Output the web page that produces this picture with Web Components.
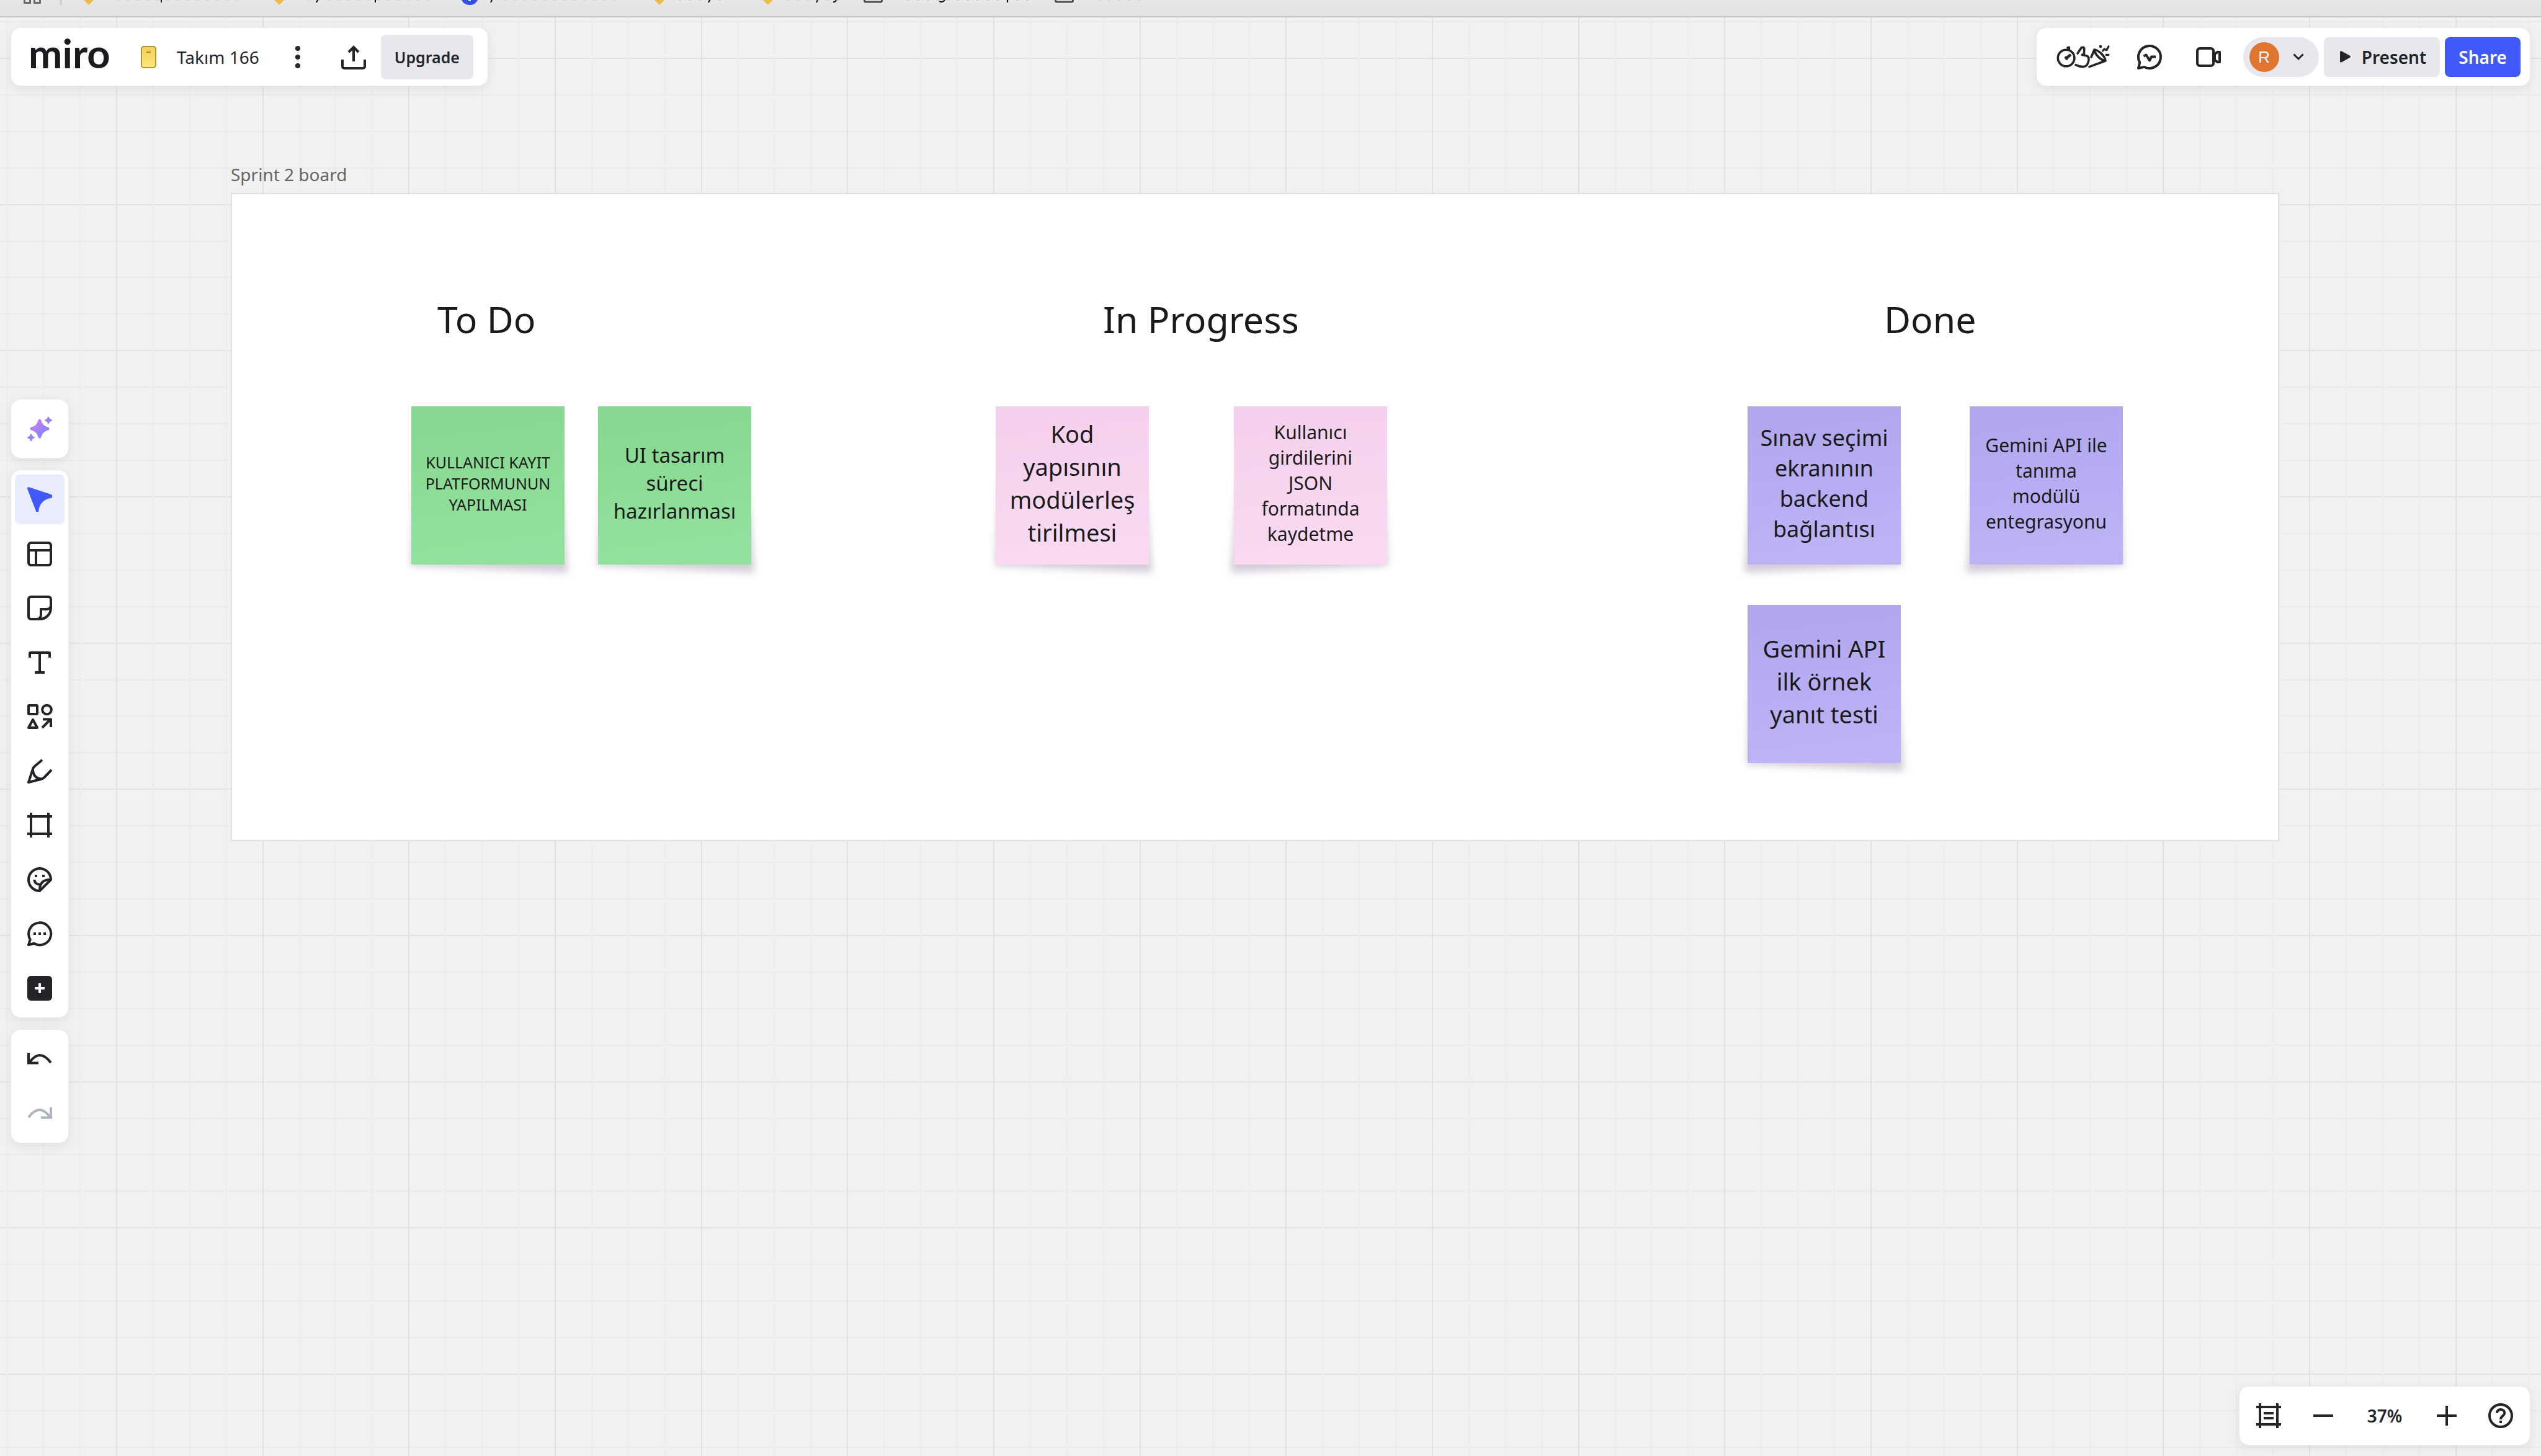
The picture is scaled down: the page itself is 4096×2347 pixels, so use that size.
<!DOCTYPE html>
<html lang="tr">
<head>
<meta charset="utf-8">
<title>Takım 166</title>
<style>
html,body{margin:0;height:100%;overflow:hidden}
body{font-family:"Noto Sans","Open Sans",sans-serif;color:#222428}
</style>
</head>
<body>
<miro-app></miro-app>
<script>
const ICONS = {
  spark: ['<defs><linearGradient id="g" x1="0" y1="0" x2="1" y2="1"><stop offset=".1" stop-color="#cb7df0"/><stop offset=".9" stop-color="#7585ff"/></linearGradient></defs><path fill="url(#g)" d="M17.6 6.5c.7-2.8 4.1-2.8 4.8 0 1.7 6.2 4.7 9.2 11 11.1 2.9.8 2.9 4.1 0 4.8-6.3 1.900-9.3 4.900-11 11.1-.7 2.800-4.1 2.800-4.8 0-1.7-6.2-4.7-9.2-11-11.1-2.9-.7-2.9-4 0-4.8 6.3-1.900 9.3-4.900 11-11.1z"/><g fill="#9f7df0"><path d="M33.3.4h1.4c.6 2.8 2 4.4 5.3 5.3v1.5c-3.3.8-4.7 2.4-5.3 5.2h-1.4c-.6-2.8-2-4.4-5.3-5.2V5.7c3.3-.9 4.7-2.5 5.3-5.3z"/><path d="M5.3 28.3h1.4c.6 2.8 2 4.4 5.3 5.3v1.5c-3.3.8-4.7 2.4-5.3 5.2H5.3c-.6-2.8-2-4.4-5.3-5.2v-1.5c3.3-.9 4.7-2.5 5.3-5.3z"/></g>',40,40],
  cursor: ['<path fill="#4059fa" d="M2.6.3 39 12.2c1.4.5 1.4 5.3 0 5.5C27 19 19 27 18.2 39.5c0 .7-3.7.7-4 0L.3 3.6C-.5 1.5.8-.3 2.6.3z"/>',40,40],
  template: ['<g class="s"><rect x="2" y="2" width="36" height="36" rx="4"/><path d="M2 14h36M14 14v24"/></g>',40,40],
  sticky: ['<g class="s"><path d="M20 38H6a4 4 0 0 1-4-4V6a4 4 0 0 1 4-4h28a4 4 0 0 1 4 4v14c0 10-8 18-18 18z"/><path d="M38 16c0 4-3 6-7 6h-9v9c0 4-3 7-7 7"/></g>',40,40],
  text: ['<g class="s"><path d="M4 12V5a1 1 0 0 1 1-1h30a1 1 0 0 1 1 1v7M20 4v32M12 36h16"/></g>',40,40],
  shapes: ['<g class="s" stroke-linejoin="round"><rect x="2" y="2" width="14" height="14" rx="1"/><circle cx="31.5" cy="9" r="7.3"/><path d="M9 25 2 38h14z"/><path d="M24 38 37 25M25 24.5h13V37"/></g>',40,40],
  pen: ['<g class="s" stroke-linejoin="round"><path d="M24 2 11.5 12.5C10 14 9.2 15.5 8.8 17L2 38l20-5c2-.5 3.5-1.2 5-2.5L39 18"/><path d="M9 17c0 9 5 15.5 14 15.5"/></g>',40,40],
  frame: ['<g class="s"><path d="M0 6h40M0 34h40M6 0v40M34 0v40"/></g>',40,40],
  sticker: ['<g class="s" stroke-linejoin="round"><path d="M20 38A18 18 0 1 1 38 20z"/><path d="M38 20c-12-.5-18.500 5-18 18M11.5 20c0 5 4 8 9 7.5"/></g><path d="M12 12h4v4h-4zM24 12h4v4h-4z"/>',40,40],
  comment: ['<g class="s" stroke-linejoin="round"><path d="M4.7 29.5A18 18 0 1 1 11 35.8L2 38z"/></g><path d="M10 18h4v4h-4zM18 18h4v4h-4zM26 18h4v4h-4z"/>',40,40],
  more: ['<rect width="40" height="40" rx="6"/><path stroke="#fff" stroke-width="4" d="M12 20h16M20 12v16"/>',40,40],
  undo: ['<g class="s"><path d="M2 10v16.5h16M3 26C9 18 14 14 20 14s12 4 18 12"/></g>',40,40],
  redo: ['<g class="s" style="stroke:#afb3c2"><path d="M38 10v16.5H22M37 26C31 18 26 14 20 14S8 18 2 26"/></g>',40,40],
  fit: ['<g class="s"><path d="M0 6h40M0 34h40M6 0v40M34 0v40M12 16h16M12 24h16"/></g>',40,40],
  minus: ['<g class="s"><path d="M4 20h32"/></g>',40,40],
  plus: ['<g class="s"><path d="M4 20h32M20 4v32"/></g>',40,40],
  help: ['<g class="s"><circle cx="20" cy="20" r="18"/><path d="M14 15.8C14 12.3 16.7 10 20 10s6.3 2.3 6.3 5.5c0 4.5-6.3 5-6.3 10.5"/></g><path d="M18 28h4v4h-4z"/>',40,40],
  kebab: ['<circle cx="20" cy="6" r="4"/><circle cx="20" cy="20" r="4"/><circle cx="20" cy="34" r="4"/>',40,40],
  upload: ['<g class="s"><path d="M2 24v11a3 3 0 0 0 3 3h30a3 3 0 0 0 3-3V24M20 27V5M12 12l8-8 8 8"/></g>',40,40],
  chat: ['<g class="s" stroke-linejoin="round"><path d="M4.2 28.7A18 18 0 1 1 11.5 35.9L2 38z"/><path d="m10.5 18.8 4-2.3 5.5 9 3-6h7"/></g>',40,40],
  video: ['<g class="s" stroke-linejoin="round"><rect x="2" y="6" width="26" height="28" rx="4"/><path d="m30 15 4.5-3H38v16h-3.5L30 25z"/></g>',40,40],
  chevron: ['<path d="m1.5 1.5 7.5 7.5 7.5-7.5" fill="none" stroke="#222428" stroke-width="3"/>',18,11],
  play: ['<path d="M0 2C0 .4 1.3-.3 2.7.4L16 7.7c1.3.8 1.3 2.3 0 3L2.7 18.3C1.3 19 0 18.3 0 16.7z"/>',17,19],
  team: ['<defs><linearGradient id="t" x1="0" y1="0" x2="0" y2="1"><stop offset="0" stop-color="#f2d055"/><stop offset="1" stop-color="#fde87c"/></linearGradient></defs><rect x="1" y="1" width="23" height="34" rx="4" fill="url(#t)" stroke="#b3923a" stroke-width="2"/><path d="M9 10h7" stroke="#a98934" stroke-width="2"/>',25,36],
  party: ['<g class="s" style="stroke-width:3.6" stroke-linecap="round" stroke-linejoin="round"><circle cx="15.6" cy="21.5" r="13.3"/><path d="m18 5 2-.8.5 3z"/><path d="m16 21.5 5.5-4.3M15 21l1.5 1.5" style="stroke-width:4.5"/><path d="M34 14 39.5 5.8c1.6-2.3 5-2 5.2 1L44.5 13c0 2.2-1 3.4-3.3 3.4l5.8 1c3.8.8 5.5 3 5 7-.8 6-2.5 11-8.5 11.2-4 .2-7.5-.6-12.5-3"/><path d="M53 35.6 79 26M56 20l5-12M61 8c7 1 17 10 18 18-8-1-17-10-18-18z"/><path d="m74.5 10 2.5-3 3.5 1.800L84 3M80 16.3h4" style="stroke-width:3.2"/></g><circle cx="71" cy="3" r="2.3"/>',86,40]
};
const icon = n => { const [b,w,h]=ICONS[n]; return `<svg class="icon" width="${w}" height="${h}" viewBox="0 0 ${w} ${h}" fill="#222428" aria-hidden="true">${b}</svg>`; };
const ICON_CSS = '.icon{display:block;overflow:visible;flex:none}.s{fill:none;stroke:#222428;stroke-width:4}';
const define = (name, render, after) => customElements.define(name, class extends HTMLElement {
  connectedCallback(){
    if (this.shadowRoot) return;
    this.attachShadow({mode:'open'}).innerHTML = render(this);
    if (after) after(this);
  }
});
const BTN = 'button{all:unset;box-sizing:border-box;display:flex;align-items:center;justify-content:center;cursor:pointer}';

/* icon-only button */
define('icon-button', el => `<style>:host{display:block}${BTN}
button{width:var(--w,80px);height:80px;border-radius:8px}
:host([active]) button{background:#e8ecfc}${ICON_CSS}</style>
<button aria-label="${el.getAttribute('label')}">${icon(el.getAttribute('icon'))}</button>`);

/* button with a caption */
define('text-button', el => `<style>:host{display:block}${BTN}
button{height:64px;padding:0 22px;gap:18px;border-radius:8px;background:#e7e8ee;font-size:28px;font-weight:600;line-height:40px;white-space:nowrap}
:host([icon]) button{padding-left:26px}
:host([primary]) button{background:#4059fa;color:#fff}
:host([tall]) button{height:72px;font-size:25px}${ICON_CSS}</style>
<button>${el.hasAttribute('icon')?icon(el.getAttribute('icon')):''}<slot></slot></button>`);

/* white floating panel */
define('float-panel', () => `<style>:host{display:flex;box-sizing:border-box;background:#fff;border:1px solid #e9eaef;border-radius:16px;box-shadow:0 4px 16px rgba(34,36,40,.08);align-items:center;pointer-events:auto}</style><slot></slot>`);

/* browser bookmarks, mostly scrolled out above the top edge */
define('bookmark-item', el => {
  const w=+el.getAttribute('width'), k=el.getAttribute('kind');
  const mark={
    drive:'<path d="M6 0h16L14 8z" fill="#ecbb49"/>',
    blue:'<path d="M1 0h26a14 14 0 0 1-26 0z" transform="translate(0 -6)" fill="#3152e0"/><path d="M1 0h26q-4 8-13 8T1 0z" fill="#3152e0"/><path d="M12 0h4v2h-4z" fill="#cfd8fa"/>',
    folder:'<path d="M1.5-4v5a2 2 0 0 0 2 2h24a2 2 0 0 0 2-2v-5" fill="#f0f0f0" stroke="#4b4e4e" stroke-width="3"/>',
    apps:'<path d="M1.5-4v8.5h9V-4M17.5-4v8.5h9V-4" fill="none" stroke="#66686d" stroke-width="3"/>',
    line:'<path d="M0-4h4v10a2 2 0 0 1-4 0z" fill="#cfcfcf"/>'}[k];
  const ink=(el.getAttribute('ink')||'').split(' ').filter(Boolean).map(Number);
  const tails=(el.getAttribute('tails')||'').split(' ').filter(Boolean).map(t=>{const x=+t.slice(1);return {p:`M${x} 0v4`,c:`M${x+1} 0l-2 4`,y:`M${x+3} 0q-2 4-5 3`,g:`M${x-4} 2q5 3 9-2`}[t[0]];}).join('');
  return `<style>:host{display:block;width:${w}px}a{display:block}svg{display:block}</style>
<a href="#" aria-label="bookmark"><svg width="${w}" height="8" viewBox="0 0 ${w} 8">${mark}
${ink.length?`<path d="M${ink[0]} 0H${ink[1]}" stroke="#b4b4b4" stroke-width="1" stroke-dasharray="4 12"/>`:''}
<path d="${tails}" fill="none" stroke="#111" stroke-width="2"/></svg></a>`;
});
define('bookmark-bar', () => `<style>:host{display:flex;box-sizing:border-box;height:28px;padding-left:38px;background:linear-gradient(#e7e7e7,#e2e2e2);border-bottom:2px solid #c7c7c7;overflow:hidden;flex:none}</style>
<bookmark-item kind="apps" width="58"></bookmark-item>
<bookmark-item kind="line" width="33"></bookmark-item>
<bookmark-item kind="drive" width="307" ink="60 255" tails="p131"></bookmark-item>
<bookmark-item kind="drive" width="307" ink="60 265" tails="c75 p169"></bookmark-item>
<bookmark-item kind="blue" width="306" ink="70 260" tails="c49"></bookmark-item>
<bookmark-item kind="drive" width="175" ink="45 125" tails="c94"></bookmark-item>
<bookmark-item kind="drive" width="168" ink="45 130" tails="c93 y121"></bookmark-item>
<bookmark-item kind="folder" width="308" ink="70 270" tails="g126 p232"></bookmark-item>
<bookmark-item kind="folder" width="160" ink="70 150"></bookmark-item>`);

/* canvas grid: every fourth line is stronger */
define('board-grid', () => '<style>:host{display:block}svg{display:block;width:100%;height:100%}</style><svg viewBox="0 28 4096 2319" preserveAspectRatio="xMinYMin slice" aria-hidden="true"></svg>', el => {
  const step=235.66/4, x0=188-3*step, y0=94-step;
  let h='',H='',v='',V='';
  for(let i=-4;i<80;i++){
    const x=Math.round(x0+i*step), y=Math.round(y0+i*step);
    if((i-3)%4===0) V+=`M${x} 0V2347`; else v+=`M${x} 0V2347`;
    if((i-1)%4===0) H+=`M0 ${y}H4096`; else h+=`M0 ${y}H4096`;
  }
  el.shadowRoot.querySelector('svg').innerHTML=`<g stroke-width="2"><path d="${h}" stroke="#ebebeb"/><path d="${H}" stroke="#e3e3e3"/><path d="${v}" stroke="#ececec"/><path d="${V}" stroke="#e1e1e1"/></g>`;
});

define('sticky-note', el => {
  const left=el.getAttribute('curl')==='left';
  const pts=left?'-5,268 6,120 242,120 248,257':'-1,257 5,120 241,120 252,268';
  return `<style>:host{position:absolute;left:var(--x);top:var(--y);width:247px;height:255px;display:block}
:host([tone=green]){--a:#87d890;--b:#93e19e}
:host([tone=pink]){--a:#f5d0ec;--b:#f9daf2}
:host([tone=violet]){--a:#b1a7ee;--b:#bdb3f7}
.shade{position:absolute;left:0;top:0;overflow:visible}
.paper{position:relative;box-sizing:border-box;width:100%;height:100%;padding-bottom:8px;display:flex;align-items:center;justify-content:center;text-align:center;background:linear-gradient(173deg,var(--a) 10%,var(--b) 90%);color:#1a1a1a;font-size:var(--fs);line-height:var(--lh)}</style>
<svg class="shade" width="247" height="255" aria-hidden="true"><defs><filter id="b" x="-20%" y="-20%" width="140%" height="150%"><feGaussianBlur stdDeviation="6"/></filter></defs><polygon points="${pts}" fill="#1d1a33" fill-opacity=".2" filter="url(#b)"/></svg>
<div class="paper"><div><slot></slot></div></div>`;
});
define('board-title', () => `<style>:host{position:absolute;left:var(--x);top:var(--y);font-size:59px;line-height:80px;color:#1a1a1a;white-space:nowrap}</style><slot></slot>`);
define('board-frame', el => `<style>:host{position:absolute;left:372px;top:283px;display:block}
.name{position:absolute;left:0;bottom:100%;font-size:28px;line-height:38px;padding-bottom:11px;color:#656565;white-space:nowrap}
.area{position:relative;box-sizing:border-box;width:3302px;height:1045px;background:#fff;border:2px solid #e0e0e0}</style>
<div class="name">${el.getAttribute('name')}</div><div class="area"><slot></slot></div>`);

define('user-menu', () => `<style>:host{display:block}${BTN}button{width:122px;height:64px;border-radius:32px;background:#e7e8ee;padding-left:10px;padding-right:24px;justify-content:space-between}
span{width:48px;height:48px;border-radius:50%;background:#df752e;color:#fff;font:26px/48px "Liberation Sans",sans-serif;text-align:center}${ICON_CSS}</style>
<button aria-label="Account"><span>R</span>${icon('chevron')}</button>`);

define('top-bar', () => `<style>:host{display:flex;justify-content:space-between}
float-panel{height:95px}
.left{width:770px;padding-left:28px;padding-right:23px}
.left text-button{margin-left:auto}
.logo{font:700 65px/80px Lato,sans-serif;color:#1a1b1e;width:181px;padding-bottom:14px}
.team{display:flex;align-items:center;gap:33px;font-size:28px;width:231px;line-height:40px}
.actions{display:flex;gap:46px}
.right{width:797px;padding-left:24px;padding-right:15px;justify-content:space-between}
.group{display:flex;gap:8px}${ICON_CSS}</style>
<float-panel class="left"><div class="logo">miro</div><div class="team">${icon('team')}<span>Takım 166</span></div>
<div class="actions"><icon-button style="--w:44px" icon="kebab" label="Board menu"></icon-button>
<icon-button style="--w:44px" icon="upload" label="Export"></icon-button></div><text-button tall>Upgrade</text-button></float-panel>
<float-panel class="right"><icon-button style="--w:102px" icon="party" label="Facilitation tools"></icon-button>
<icon-button icon="chat" label="Activity"></icon-button><icon-button icon="video" label="Video call"></icon-button>
<div class="group"><user-menu></user-menu><text-button icon="play">Present</text-button><text-button primary>Share</text-button></div></float-panel>`);

define('tool-rail', () => {
  const t=['cursor','template','sticky','text','shapes','pen','frame','sticker','comment','more'];
  return `<style>:host{display:flex;flex-direction:column;gap:18px}
float-panel{width:94px;flex-direction:column;justify-content:space-between;padding:7px 0}
.ai{height:96px}.tools{height:884px}.history{height:184px}</style>
<float-panel class="ai"><icon-button icon="spark" label="AI"></icon-button></float-panel>
<float-panel class="tools">${t.map((n,i)=>`<icon-button icon="${n}" label="${n}"${i?'':' active'}></icon-button>`).join('')}</float-panel>
<float-panel class="history"><icon-button icon="undo" label="undo"></icon-button><icon-button icon="redo" label="redo"></icon-button></float-panel>`;
});
define('zoom-bar', () => `<style>:host{display:block}float-panel{width:470px;height:96px;padding:0 7px;justify-content:space-between}${BTN}
button{width:104px;height:80px;font-size:28px;font-weight:600}</style>
<float-panel><icon-button icon="fit" label="Frames"></icon-button><icon-button icon="minus" label="Zoom out"></icon-button><button>37%</button><icon-button icon="plus" label="Zoom in"></icon-button><icon-button icon="help" label="Help"></icon-button></float-panel>`);

define('miro-app', () => `<style>:host{display:flex;flex-direction:column;height:100vh;background:#f1f1f1}
main{flex:1;display:grid;min-height:0;position:relative}
main>*{grid-area:1/1}
.canvas{position:relative}
.ui{display:flex;flex-direction:column;padding:16px 17px 0;pointer-events:none;position:relative}
.body{flex:1;display:flex;justify-content:space-between;align-items:center}
zoom-bar{align-self:flex-end;padding-bottom:17px}</style>
<bookmark-bar></bookmark-bar>
<main><board-grid></board-grid>
<div class="canvas"><board-frame name="Sprint 2 board">
<board-title style="--x:331px;--y:161px">To Do</board-title>
<board-title style="--x:1404px;--y:161px">In Progress</board-title>
<board-title style="--x:2663px;--y:161px">Done</board-title>
<sticky-note tone="green" style="--x:289px;--y:342px;--fs:25px;--lh:34px">KULLANICI KAYIT<br>PLATFORMUNUN<br>YAPILMASI</sticky-note>
<sticky-note tone="green" style="--x:590px;--y:342px;--fs:33px;--lh:45px">UI tasarım<br>süreci<br>hazırlanması</sticky-note>
<sticky-note tone="pink" style="--x:1231px;--y:342px;--fs:38px;--lh:53px">Kod<br>yapısının<br>modülerleş<br>tirilmesi</sticky-note>
<sticky-note tone="pink" curl="left" style="--x:1615px;--y:342px;--fs:30px;--lh:41px">Kullanıcı<br>girdilerini<br>JSON<br>formatında<br>kaydetme</sticky-note>
<sticky-note tone="violet" curl="left" style="--x:2443px;--y:342px;--fs:36px;--lh:49px">Sınav seçimi<br>ekranının<br>backend<br>bağlantısı</sticky-note>
<sticky-note tone="violet" curl="left" style="--x:2801px;--y:342px;--fs:30px;--lh:41px">Gemini API ile<br>tanıma<br>modülü<br>entegrasyonu</sticky-note>
<sticky-note tone="violet" style="--x:2443px;--y:662px;--fs:38px;--lh:53px">Gemini API<br>ilk örnek<br>yanıt testi</sticky-note>
</board-frame></div>
<div class="ui"><top-bar></top-bar><div class="body"><tool-rail></tool-rail><zoom-bar></zoom-bar></div></div></main>`);
</script>
</body>
</html>
